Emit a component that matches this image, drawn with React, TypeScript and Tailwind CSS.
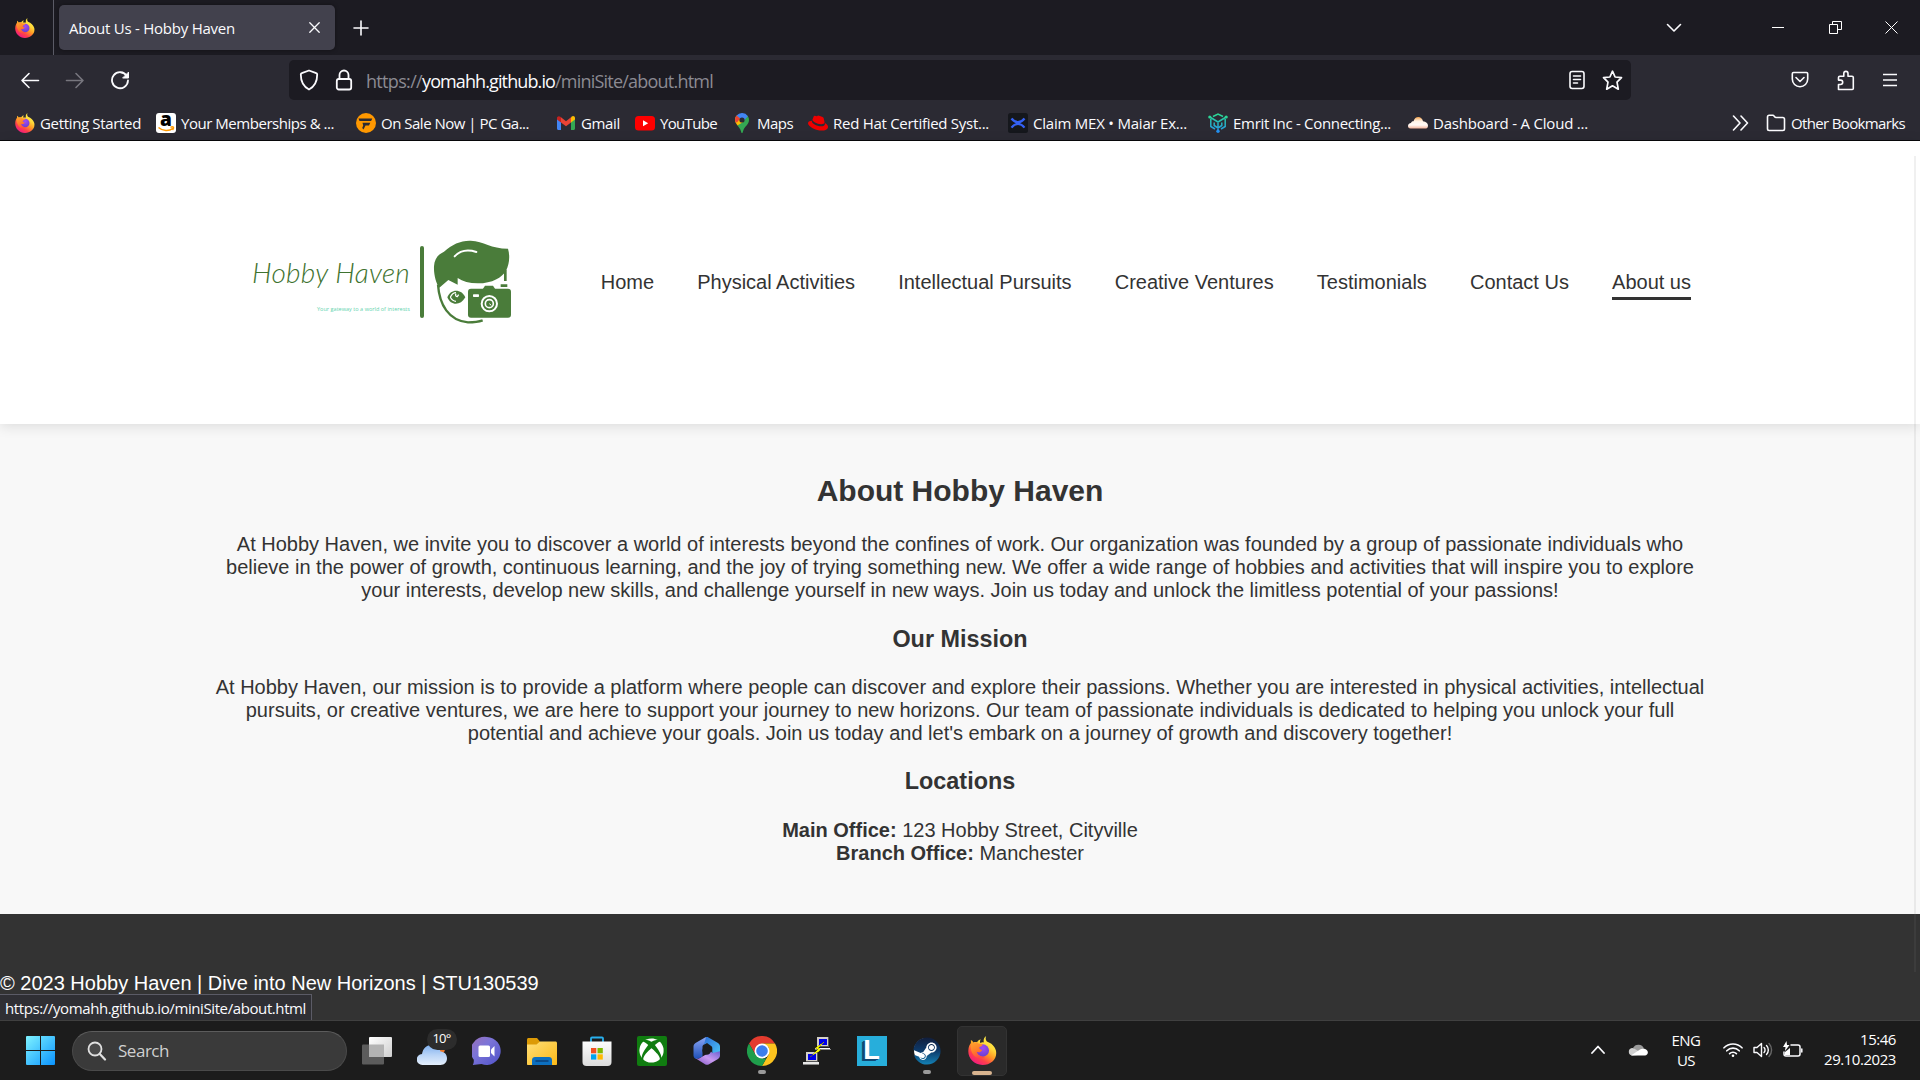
import React, { useLayoutEffect, useRef, useState } from "react";
import { FaSteam, FaXbox, FaRedhat } from "react-icons/fa";

/* Text whose tracking is adjusted so that it spans a given width. */
function Fit({ w, className = "", children }: { w: number; className?: string; children: string }) {
  const ref = useRef<HTMLSpanElement>(null);
  const [ls, setLs] = useState(0);
  useLayoutEffect(() => {
    if (ref.current) {
      const natural = ref.current.getBoundingClientRect().width;
      setLs((w - natural) / children.length);
    }
  }, []);
  return (
    <span ref={ref} className={"inline-block whitespace-pre " + className} style={{ letterSpacing: ls }}>
      {children}
    </span>
  );
}

function Firefox({ size = 20 }: { size?: number }) {
  return (
    <svg width={size} height={size} viewBox="0 0 40 40" className="shrink-0">
      <defs>
        <linearGradient id="ffBody" x1="0.85" y1="0.05" x2="0.25" y2="1">
          <stop offset="0" stopColor="#fff44f" />
          <stop offset="0.3" stopColor="#ffd93a" />
          <stop offset="0.52" stopColor="#ff9a24" />
          <stop offset="0.75" stopColor="#ff3f4b" />
          <stop offset="1" stopColor="#f0158a" />
        </linearGradient>
        <linearGradient id="ffHead" x1="0" y1="0" x2="0.4" y2="1">
          <stop offset="0" stopColor="#ffa52e" />
          <stop offset="0.6" stopColor="#ff7a2a" />
          <stop offset="1" stopColor="#ff4a45" />
        </linearGradient>
        <radialGradient id="ffGlobe" cx="0.5" cy="0.3" r="0.7">
          <stop offset="0" stopColor="#a24cf5" />
          <stop offset="1" stopColor="#6a3fd0" />
        </radialGradient>
      </defs>
      <path d="M25 0c-1 3-1 5 1 7.500C32 9.500 37 14 38.500 20 41 31 32 40 20 40 8 40-.500 30 .500 19.500.800 15 2 12 4 9.500V5.500c1.500.8 2.800 2 3.500 3.300C9 8.300 11 8.200 12.500 8.600c1.500-2.200 3-3.400 5-4-1 2-1.200 3.400-.5 5 2-1 3.500-1 5-.6C20.800 6 22 2 25 0Z" fill="url(#ffBody)" />
      <circle cx="20.500" cy="20" r="8.500" fill="url(#ffGlobe)" />
      <path d="M4.500 11c4-3 8-2.800 10.500-.2 2.200.2 4.500.3 5.200 1.200-.2 2.200-4.200 2.800-4.700 4-.2 1.700 1.500 2.500 4 3.200-1.200 3.300-5.500 3.800-8.200 2.500C13 27 18 29.500 24 28.500c-5 3.500-12 3-16-1.500C4 22 3 16 4.500 11Z" fill="url(#ffHead)" />
    </svg>
  );
}

const stroke = {
  fill: "none",
  stroke: "#fbfbfe",
  strokeWidth: 1.6,
  strokeLinecap: "round" as const,
  strokeLinejoin: "round" as const,
};

/* ---------- browser chrome ---------- */

function TabBar() {
  return (
    <div className="flex h-[55px] items-center bg-[#1c1b22]">
      <div className="flex h-full w-[54px] items-center border-r border-[#5b5b66] pl-[15px]">
        <Firefox />
      </div>
      <div className="ml-[5px] flex h-[45px] w-[276px] items-center justify-between rounded-[5px] bg-[#42414d] pr-[15px] pl-[10px] shadow-[0_0_4px_rgba(0,0,0,0.4)]">
        <Fit w={166} className="pt-[2px] text-[15px] text-[#fbfbfe]">About Us - Hobby Haven</Fit>
        <svg width="11" height="11" viewBox="0 0 11 11" {...stroke} strokeWidth={1.3}>
          <path d="M.8.8l9.400 9.400M10.200.8L.8 10.200" />
        </svg>
      </div>
      <svg className="ml-[18px]" width="16" height="16" viewBox="0 0 16 16" {...stroke}>
        <path d="M8 1v14M1 8h14" />
      </svg>
      <div className="ml-auto flex items-center pr-[22px]">
        <svg className="mr-[90px]" width="16" height="10" viewBox="0 0 16 10" {...stroke}>
          <path d="M1.500 1.500L8 8l6.500-6.500" />
        </svg>
        <svg className="mr-[45px]" width="12" height="12" viewBox="0 0 12 12" stroke="#fff" fill="none">
          <path d="M0 5.500h12" />
        </svg>
        <svg className="mr-[43px]" width="13" height="13" viewBox="0 0 13 13" stroke="#fff" fill="none">
          <path d="M.5 3.500h8v9h-8zM3.500 3.500v-3h9v8h-4" />
        </svg>
        <svg width="13" height="13" viewBox="0 0 13 13" stroke="#fff" fill="none">
          <path d="M.5.5l12 12M12.500.5l-12 12" />
        </svg>
      </div>
    </div>
  );
}

function Toolbar() {
  return (
    <div className="flex h-[50px] items-center bg-[#2b2a33] pl-[20px]">
      <svg width="20" height="20" viewBox="0 0 20 20" {...stroke}>
        <path d="M18.500 10.500H2M9 3.500l-7 7 7 7" />
      </svg>
      <svg className="ml-[25px]" width="20" height="20" viewBox="0 0 20 20" {...stroke} stroke="#77767e">
        <path d="M1.500 10.500H18M11 3.500l7 7-7 7" />
      </svg>
      <svg className="ml-[25px]" width="20" height="20" viewBox="0 0 20 20" {...stroke} strokeWidth={1.800}>
        <path d="M16.800 6A8 8 0 1 0 18 10.500" />
        <path d="M18.500 2.500V8H13z" fill="#fbfbfe" strokeWidth={1} />
      </svg>
      <div className="ml-[159px] flex h-[40px] w-[1342px] items-center rounded-[5px] bg-[#1c1b22] pr-[8px] pl-[10px]">
        <svg width="20" height="22" viewBox="0 0 20 22" {...stroke} strokeWidth={1.800}>
          <path d="M10 1.500l7.200 2.700c.6.200 1 .8 1 1.400C18.200 12 16 17.500 10 20.500 4 17.500 1.800 12 1.800 5.600c0-.6.4-1.200 1-1.400z" />
        </svg>
        <svg className="ml-[16px]" width="18" height="22" viewBox="0 0 18 22" {...stroke} strokeWidth={1.800}>
          <rect x="1.800" y="10" width="14.400" height="10.500" rx="2" />
          <path d="M4.500 10V6a4.500 4.500 0 0 1 9 0v4" />
        </svg>
        <div className="ml-[13px] flex pt-[3px] text-[18px] text-[#8b8a92]">
          <Fit w={56}>https://</Fit>
          <Fit w={133} className="text-[#fbfbfe]">yomahh.github.io</Fit>
          <Fit w={158}>/miniSite/about.html</Fit>
        </div>
        <svg className="ml-auto" width="16" height="20" viewBox="0 0 16 20" {...stroke}>
          <rect x="1" y="1.500" width="14" height="17" rx="2.200" />
          <path d="M4.500 6h7M4.500 9.500h7M4.500 13h4" />
        </svg>
        <svg className="ml-[17px]" width="21" height="21" viewBox="0 0 21 21" {...stroke} strokeWidth={1.700}>
          <path d="M10.500 1.200l2.600 5.800 6.400.7-4.500 4.500 1.300 7-5.800-3.400-5.800 3.400 1.300-7L1.500 7.700l6.400-.7z" />
        </svg>
      </div>
      <svg className="ml-[160px]" width="18" height="18" viewBox="0 0 18 18" {...stroke}>
        <path d="M2.500 1.500h13c.7 0 1.200.5 1.200 1.200V8a7.700 7.700 0 0 1-15.400 0V2.700c0-.7.5-1.200 1.200-1.200zM5 6.500l4 4 4-4" />
      </svg>
      <svg className="ml-[27px]" width="19" height="21" viewBox="0 0 19 21" {...stroke}>
        <path d="M2.500 19.500v-5h2a2.200 2.200 0 0 0 0-4.400h-2V7.500c0-.8.5-1.300 1.300-1.300h4V3.500a2 2 0 0 1 4.200 0v2.700h4c.8 0 1.300.5 1.300 1.300v11c0 .6-.5 1-1 1z" />
      </svg>
      <svg className="ml-[27px]" width="16" height="14" viewBox="0 0 16 14" {...stroke} strokeWidth={1.500} strokeLinecap="butt">
        <path d="M1 1.500h14M1 7h14M1 12.500h14" />
      </svg>
    </div>
  );
}

const AmazonIcon = () => (
  <div className="relative flex size-5 justify-center rounded-[3px] bg-white">
    <span className="font-['Open_Sans'] text-[19px] leading-[12px] font-extrabold text-black">a</span>
    <svg className="absolute inset-0" width="20" height="20" viewBox="0 0 20 20" fill="none" stroke="#ff9900" strokeWidth="1.500">
      <path d="M2.500 14.500c4.500 4 10.500 4 14.500.8M14.500 14.300c1-.5 2.500-.5 3 0 .2.800-.3 2-1 2.800" />
    </svg>
  </div>
);

const FanaticalIcon = () => (
  <svg width="20" height="20" viewBox="0 0 20 20">
    <circle cx="10" cy="10" r="10" fill="#ff9800" />
    <path d="M2.500 5.500h13.800l-1.200 2.600H3.500zM6.500 9.800h7.800l-1.300 2.600H9.500l-2 4L6.200 15l1-2.600z" fill="#2b2a33" />
  </svg>
);

const GmailIcon = () => (
  <svg width="20" height="20" viewBox="0 0 20 20">
    <path d="M1 5v10.500c0 .8.600 1.500 1.500 1.500H5V8.500z" fill="#4285f4" />
    <path d="M19 5v10.500c0 .8-.6 1.500-1.500 1.500H15V8.500z" fill="#34a853" />
    <path d="M15 4.500v5l4-3V5c0-1.900-2-2.700-3.300-1.400z" fill="#fbbc04" />
    <path d="M5 9.500V4.300l5 3.900 5-3.900v5.200l-5 3.800z" fill="#ea4335" />
    <path d="M1 5v1.500l4 3V4.300l-.7-.6C3 2.500 1 3.300 1 5z" fill="#c5221f" />
  </svg>
);

const YouTubeIcon = () => (
  <svg width="20" height="20" viewBox="0 0 20 20">
    <rect x="0" y="3" width="20" height="14.500" rx="3.500" fill="#f00" />
    <path d="M8 7.200v6l5.200-3z" fill="#fff" />
  </svg>
);

const MapsIcon = () => (
  <svg width="20" height="20" viewBox="0 0 20 20">
    <path d="M10 20c-.6 0-.8-1-1.300-2.600-.7-2-2-3.300-3.200-5L14.700 2c1.500 1.200 2.300 2.900 2.300 5 0 4.500-4.500 6.500-5.700 10.400C10.800 19 10.600 20 10 20z" fill="#34a853" />
    <path d="M5.500 12.400C4 10.500 3 9 3 7c0-1.700.6-3.200 1.600-4.400l3.800 3L12 8.500z" fill="#fbbc04" />
    <path d="M4.600 2.600l3.600 3L5 9.500 3.300 9C2.700 6.500 3.200 4.300 4.600 2.600z" fill="#ea4335" />
    <path d="M4.600 2.600A7 7 0 0 1 15.800 3.200L12 7.500 8.200 5.600z" fill="#4285f4" />
    <circle cx="10" cy="7" r="2.600" fill="#2b2a33" />
  </svg>
);

const ClaimIcon = () => (
  <svg width="20" height="20" viewBox="0 0 20 20">
    <rect width="20" height="20" rx="2.500" fill="#15171c" />
    <path d="M3.500 5.500c2 2.700 4 3.700 6.500 3.700s4.500-1 6.500-3.700M3.500 14.700c2-2.700 4-3.700 6.500-3.700s4.500 1 6.500 3.700" fill="none" stroke="#3461f5" strokeWidth="2.200" />
  </svg>
);

const EmritIcon = () => (
  <svg width="20" height="20" viewBox="0 0 20 20" fill="none" strokeWidth="1.500">
    <defs>
      <linearGradient id="em" x1="0" y1="0" x2="0" y2="20" gradientUnits="userSpaceOnUse">
        <stop offset="0" stopColor="#2bdc8c" />
        <stop offset="1" stopColor="#2390f0" />
      </linearGradient>
    </defs>
    <g stroke="url(#em)">
      <path d="M5 3.500L10 1l5 2.500M1.800 4l8.200 5 8.200-5M10 9v9M2.800 6v7.500L7 16M17.200 6v7.500L13 16M6.200 9.500V12.500L10 15l3.800-2.500V9.500" />
    </g>
    <circle cx="1.800" cy="4" r="1.600" fill="#2bd596" />
    <circle cx="18.200" cy="4" r="1.600" fill="#2bd596" />
    <circle cx="10" cy="18.200" r="1.700" fill="#2390f0" />
  </svg>
);

const CloudIcon = () => (
  <svg width="20" height="20" viewBox="0 0 20 20">
    <defs>
      <linearGradient id="cl" x1="0" y1="0" x2="0" y2="1">
        <stop offset="0" stopColor="#f6a34a" />
        <stop offset="0.35" stopColor="#fff3e6" />
        <stop offset="0.7" stopColor="#fffaf7" />
        <stop offset="1" stopColor="#f3b49a" />
      </linearGradient>
    </defs>
    <path d="M2.500 15.500C.8 15.500 0 14.300 0 13c0-1.700 1.300-2.700 3-2.900.3-1.500 1.300-2 2.500-1.900C6.300 5.600 8 4 10.300 4c2.300 0 4.200 1.600 4.700 4.300 3 .2 5 2 5 4.500 0 1.500-.8 2.700-2 2.700z" fill="url(#cl)" />
  </svg>
);

const bookmarks: { label: string; tw: number; box: string; icon: React.ReactNode }[] = [
  { label: "Getting Started", tw: 101, box: "w-[141px]", icon: <Firefox /> },
  { label: "Your Memberships & ...", tw: 153, box: "w-[200px]", icon: <AmazonIcon /> },
  { label: "On Sale Now | PC Ga...", tw: 148, box: "w-[200px]", icon: <FanaticalIcon /> },
  { label: "Gmail", tw: 39, box: "w-[79px]", icon: <GmailIcon /> },
  { label: "YouTube", tw: 57, box: "w-[97px]", icon: <YouTubeIcon /> },
  { label: "Maps", tw: 36, box: "w-[76px]", icon: <MapsIcon /> },
  { label: "Red Hat Certified Syst...", tw: 156, box: "w-[200px]", icon: <FaRedhat size={20} color="#ee0000" /> },
  { label: "Claim MEX • Maiar Ex...", tw: 154, box: "w-[200px]", icon: <ClaimIcon /> },
  { label: "Emrit Inc - Connecting...", tw: 158, box: "w-[200px]", icon: <EmritIcon /> },
  { label: "Dashboard - A Cloud ...", tw: 155, box: "w-[200px]", icon: <CloudIcon /> },
];

function BookmarksBar() {
  return (
    <div className="flex h-[36px] items-center border-b border-[#08080a] bg-[#2b2a33] pl-[15px] text-[15px] text-[#fbfbfe]">
      {bookmarks.map((b) => (
        <div key={b.label} className={"flex shrink-0 items-center gap-[5px] " + b.box}>
          {b.icon}
          <Fit w={b.tw} className="pt-[2px]">{b.label}</Fit>
        </div>
      ))}
      <div className="ml-auto flex items-center pr-[15px]">
        <svg className="mr-[17px]" width="17" height="16" viewBox="0 0 17 16" {...stroke}>
          <path d="M1.500 1l6.500 7-6.500 7M9 1l6.500 7L9 15" />
        </svg>
        <svg className="mr-[5px]" width="20" height="18" viewBox="0 0 20 18" {...stroke}>
          <path d="M1.500 3c0-1 .7-1.700 1.700-1.700h3.600c1.500 0 1.700 2.200 3.200 2.200h6.800c1 0 1.700.7 1.700 1.700v9.600c0 1-.7 1.700-1.700 1.700H3.200c-1 0-1.700-.7-1.700-1.700z" />
        </svg>
        <Fit w={114} className="pt-[2px]">Other Bookmarks</Fit>
      </div>
    </div>
  );
}

/* ---------- web page ---------- */

function Logo() {
  return (
    <div className="flex items-start">
      <div className="flex w-[158px] flex-col items-end pt-[14px]">
        <Fit w={158} className="font-['Lato'] text-[28px] leading-[40px] font-light text-[#3f7330] italic">Hobby Haven</Fit>
        <Fit w={93} className="mt-[13px] font-['Open_Sans'] text-[5.500px] leading-[8px] text-[#5fd3ae]">Your gateway to a world of interests</Fit>
      </div>
      <div className="mt-[8px] ml-[10px] h-[72px] w-[4px] rounded-full bg-[#4a7c3a]" />
      <svg className="ml-[6px]" width="86.670" height="90" viewBox="600 55 260 270">
        <g fill="#4a7c3a">
          <path d="M628 204C618 190 611 165 612 140c1-22 12-36 30-44 25-22 50-34 80-33 40 2 60 24 112 24 6 20 5 45-6 66-12 20-40 38-85 38-25 0-45-6-60-16v20l-28-14z" />
          <path d="M822 150h8v34h-8zM812 194h20v8h-20z" />
          <path d="M652 233c10-26 42-26 54 0-14 26-44 26-54 0z" />
          <rect x="714" y="207" width="129" height="87" rx="9" />
          <path d="M757 210l8-12h24l8 12z" />
        </g>
        <path d="M624 195c4 60 32 108 90 113 18 0 30-1 44-6" fill="none" stroke="#4a7c3a" strokeWidth="7" />
        <path d="M674 110c16-17 40-21 65-13" fill="none" stroke="#fff" strokeWidth="6" strokeLinecap="round" />
        <path d="M661 233c5-11 10-14 17-14M661 233c5 9 10 12 17 12" fill="none" stroke="#fff" strokeWidth="3.500" />
        <path d="M678 222c-3 5 0 9 4 9l4-6" fill="none" stroke="#fff" strokeWidth="4" />
        <rect x="729" y="224" width="18" height="8" rx="2" fill="#fff" />
        <circle cx="778" cy="252" r="23" fill="none" stroke="#fff" strokeWidth="6" />
        <circle cx="778" cy="252" r="12" fill="none" stroke="#fff" strokeWidth="5" />
        <path d="M778 252l6 5" stroke="#fff" strokeWidth="3" />
      </svg>
    </div>
  );
}

const nav = ["Home", "Physical Activities", "Intellectual Pursuits", "Creative Ventures", "Testimonials", "Contact Us"];

function Page() {
  return (
    <div className="relative flex h-[879px] flex-col bg-[#f8f8f8] font-['Liberation_Sans',Arial,sans-serif] text-[20px] leading-[23px] text-[#333]">
      <header className="z-10 flex h-[283px] shrink-0 items-start justify-between bg-white pr-[229px] pl-[252px] shadow-[0_2px_13px_rgba(0,0,0,0.12)]">
        <div className="mt-[97px]"><Logo /></div>
        <nav className="mt-[130px] flex gap-[43.130px]">
          {nav.map((n) => (
            <span key={n}>{n}</span>
          ))}
          <span className="border-b-3 border-[#333] pb-[3px]">About us</span>
        </nav>
      </header>
      <main className="h-[490px] shrink-0 pt-[50px] text-center whitespace-nowrap">
        <h1 className="text-[30px] leading-[34px] font-bold">About Hobby Haven</h1>
        <p className="mt-[25px]">
          At Hobby Haven, we invite you to discover a world of interests beyond the confines of work. Our organization was founded by a group of passionate individuals who<br />
          believe in the power of growth, continuous learning, and the joy of trying something new. We offer a wide range of hobbies and activities that will inspire you to explore<br />
          your interests, develop new skills, and challenge yourself in new ways. Join us today and unlock the limitless potential of your passions!
        </p>
        <h3 className="mt-[24px] text-[23.400px] leading-[27px] font-bold">Our Mission</h3>
        <p className="mt-[23px]">
          At Hobby Haven, our mission is to provide a platform where people can discover and explore their passions. Whether you are interested in physical activities, intellectual<br />
          pursuits, or creative ventures, we are here to support your journey to new horizons. Our team of passionate individuals is dedicated to helping you unlock your full<br />
          potential and achieve your goals. Join us today and let's embark on a journey of growth and discovery together!
        </p>
        <h3 className="mt-[23px] text-[23.400px] leading-[27px] font-bold">Locations</h3>
        <p className="mt-[24px]">
          <b>Main Office:</b> 123 Hobby Street, Cityville<br />
          <b>Branch Office:</b> Manchester
        </p>
      </main>
      <footer className="flex-1 bg-[#333] pt-[58px] text-white">© 2023 Hobby Haven | Dive into New Horizons | STU130539</footer>
      <div className="absolute top-[15px] right-[4px] z-20 h-[816px] w-[2px] bg-[#808080]/12" />
      <div className="absolute bottom-0 left-0 z-20 flex h-[26px] w-[312px] items-center border-t border-r border-[#5b5b66] bg-[#2f2f34] pt-[2px] pl-[5px] font-['Open_Sans','Noto_Sans',sans-serif] text-[15px] text-[#fbfbfe]">
        <Fit w={301}>https://yomahh.github.io/miniSite/about.html</Fit>
      </div>
    </div>
  );
}

/* ---------- taskbar ---------- */

const TaskView = () => (
  <svg width="30" height="30" viewBox="0 0 30 30">
    <defs>
      <linearGradient id="tv" x1="0" y1="0" x2="1" y2="1"><stop stopColor="#fff" /><stop offset="1" stopColor="#cfcfcf" /></linearGradient>
    </defs>
    <rect x="0" y="8.500" width="22" height="20" rx="1" fill="#5c5c5c" />
    <rect x="7" y="1" width="23" height="20" rx="1" fill="url(#tv)" />
    <path d="M7 8.500h15V21H7z" fill="#b3b3b3" />
  </svg>
);

const Weather = () => (
  <div className="relative size-[30px]">
    <svg className="absolute inset-0" width="30" height="30" viewBox="0 0 30 30">
      <defs>
        <linearGradient id="we" x1="0" y1="0" x2="0" y2="1"><stop stopColor="#7fb0ee" /><stop offset=".5" stopColor="#b9d4f7" /><stop offset="1" stopColor="#e4effc" /></linearGradient>
      </defs>
      <circle cx="22" cy="13" r="6" fill="#e8762c" />
      <path d="M5.500 29A5.500 5.500 0 0 1 5 18c1-6 5-9 9.500-9 4.500 0 7.500 2.500 9 6.500 4 .3 6.500 3 6.500 6.800 0 4-2.700 6.700-6.500 6.700z" fill="url(#we)" />
    </svg>
    <span className="absolute -top-[7px] left-[10px] flex h-[21px] w-[30px] items-center justify-center rounded-full bg-[#2c2c2c] text-[13px] text-white">
      <Fit w={18}>10°</Fit>
    </span>
  </div>
);

const Chat = () => (
  <svg width="30" height="30" viewBox="0 0 30 30">
    <defs>
      <linearGradient id="ch" x1="0" y1="0" x2="1" y2="1"><stop stopColor="#9a6fb8" /><stop offset=".4" stopColor="#7b74d8" /><stop offset="1" stopColor="#4f52c8" /></linearGradient>
    </defs>
    <path d="M15 1a14 14 0 1 1-5.500 27L.8 29c1-2 1.200-3.500.9-5.500A14 14 0 0 1 15 1z" fill="url(#ch)" />
    <rect x="6.500" y="9.500" width="11.500" height="11.500" rx="1.500" fill="#fff" />
    <path d="M19 13.500l3.500-3.500v10.500L19 17z" fill="#fff" />
  </svg>
);

const Explorer = () => (
  <svg width="30" height="30" viewBox="0 0 30 30">
    <defs>
      <linearGradient id="ex" x1="0" y1="0" x2="1" y2="1"><stop stopColor="#ffdf78" /><stop offset="1" stopColor="#fbb917" /></linearGradient>
    </defs>
    <path d="M0 8V3.500C0 2.700.7 2 1.500 2H10l3 3.500V10H0z" fill="#dc9a06" />
    <path d="M0 8.500h9.500L13 5.500h15.500c.8 0 1.500.7 1.500 1.500v21c0 .6-.4 1-1 1H1c-.6 0-1-.4-1-1z" fill="url(#ex)" />
    <path d="M5 29v-5c0-1.700 1.300-3 3-3h14c1.700 0 3 1.300 3 3v5z" fill="#0c6fbf" />
    <path d="M8.500 25h13" stroke="#0a3f78" strokeWidth="1.500" />
  </svg>
);

const Store = () => (
  <svg width="30" height="30" viewBox="0 0 30 30">
    <defs>
      <linearGradient id="st" x1="0" y1="0" x2="0" y2="1"><stop stopColor="#fdfdfd" /><stop offset="1" stopColor="#dcdcdc" /></linearGradient>
    </defs>
    <path d="M9 6V2.500c0-.6.400-1 1-1h10c.6 0 1 .4 1 1V6" fill="none" stroke="#28b0ee" strokeWidth="1.800" />
    <path d="M.5 5.500h29V26a4 4 0 0 1-4 4h-21a4 4 0 0 1-4-4z" fill="url(#st)" />
    <path d="M9 12h5.300v5.300H9z" fill="#f25022" /><path d="M15.500 12h5.300v5.300h-5.300z" fill="#7fba00" />
    <path d="M9 18.300h5.300v5.300H9z" fill="#00a4ef" /><path d="M15.500 18.300h5.300v5.300h-5.300z" fill="#ffb900" />
  </svg>
);

const Xbox = () => (
  <div className="flex size-[30px] items-center justify-center rounded-[2px] bg-[#107c10]">
    <FaXbox size={25} color="#fff" />
  </div>
);

const Office = () => (
  <svg width="30" height="30" viewBox="0 0 30 30">
    <defs>
      <linearGradient id="o1" x1="0" y1="0" x2="0" y2="1"><stop stopColor="#8ba6f5" /><stop offset="1" stopColor="#1e4fb8" /></linearGradient>
      <linearGradient id="o2" x1="0" y1="0" x2="1" y2="1"><stop stopColor="#2d6fd8" /><stop offset="1" stopColor="#4cc6f5" /></linearGradient>
      <linearGradient id="o3" x1="0" y1="1" x2="1" y2="0"><stop stopColor="#7a52c0" /><stop offset="0.5" stopColor="#c99af0" /><stop offset="1" stopColor="#6a5fd0" /></linearGradient>
    </defs>
    <path d="M13 1.500L3.500 7c-1.200.7-2 2-2 3.400v9.200c0 2.500 2.500 4.300 5 3l4-2.200V11c0-1 .5-2 1.400-2.500L19 4.500 15.500 1.500c-.8-.4-1.700-.4-2.500 0z" fill="url(#o1)" />
    <path d="M14 1.200l-2 7.300 3-1.500 4.500 3.300c.5.400.8 1 .8 1.700v7l6.200-1c1.200-.5 1.500-1.500 1.500-3v-4.600c0-1.400-.8-2.700-2-3.400L16.500 1.500c-.8-.4-1.700-.6-2.500-.3z" fill="url(#o2)" />
    <path d="M3.500 22.300c1.500.8 3 .5 4.500-.4L19 15.500l1.500 1.500 7.500-1.800v4.400c0 1.400-.8 2.700-2 3.400l-9 5.300c-1.200.7-2.800.7-4 0z" fill="url(#o3)" />
    <circle cx="14.700" cy="14.500" r="4.300" fill="#1c1c1c" />
  </svg>
);

const Chrome = () => (
  <svg width="30" height="30" viewBox="0 0 30 30">
    <path d="M2 7.500A15 15 0 0 1 28 7.500H15L8.500 18.700z" fill="#e33b2e" />
    <path d="M28 7.500A15 15 0 0 1 15 30l6.500-11.200L21.500 11.200 15 7.500z" fill="#fcc31e" />
    <path d="M15 30A15 15 0 0 1 2 7.500l6.500 11.300L15 22.500h4.300z" fill="#1f9e4b" />
    <circle cx="15" cy="15" r="7.500" fill="#fff" />
    <circle cx="15" cy="15" r="5.800" fill="#3b7ded" />
  </svg>
);

const Putty = () => (
  <svg width="30" height="30" viewBox="0 0 30 30" shapeRendering="crispEdges">
    <g>
      <path d="M15 1h12v10h-12z" fill="#d4d0c8" /><path d="M26 1h1v10h-12v-1h11z" fill="#555" /><path d="M17 3h8v6h-8z" fill="#0000e8" />
      <path d="M13 12h15v2h-15z" fill="#fff" /><path d="M13 13h16v1H13z" fill="#888" />
    </g>
    <g>
      <path d="M4 16h12v10H4z" fill="#d4d0c8" /><path d="M15 16h1v10H4v-1h11z" fill="#555" /><path d="M6 18h8v6H6z" fill="#0000e8" />
      <path d="M1 26h16v3H1z" fill="#e8e8e8" /><path d="M1 28h16v1H1z" fill="#888" />
    </g>
    <path d="M22 6l-9 6 3 1.500-8 7.500 11-7-3-2z" fill="#ff0" stroke="#7a7a00" strokeWidth=".4" />
  </svg>
);

const LApp = () => (
  <div className="relative flex size-[30px] items-center justify-center bg-[#27aedb]">
    <span className="font-['Liberation_Sans'] text-[27px] leading-none font-bold text-white [text-shadow:-1px_1px_0_#0f4a75,-2px_1px_0_#0f4a75,-3px_2px_0_#0f4a75]">L</span>
  </div>
);

const Steam = () => (
  <div className="relative flex size-[30px] items-center justify-center">
    <svg className="absolute size-0">
      <defs>
        <linearGradient id="sm" x1="0" y1="0" x2="0" y2="1"><stop stopColor="#111d3b" /><stop offset=".5" stopColor="#0d3b6b" /><stop offset="1" stopColor="#1381b5" /></linearGradient>
      </defs>
    </svg>
    <div className="absolute size-[25px] rounded-full bg-white" />
    <FaSteam size={28} fill="url(#sm)" className="relative" />
  </div>
);

const apps: { id: string; icon: React.ReactNode; dot?: boolean }[] = [
  { id: "view", icon: <TaskView /> },
  { id: "weather", icon: <Weather /> },
  { id: "chat", icon: <Chat /> },
  { id: "explorer", icon: <Explorer /> },
  { id: "store", icon: <Store /> },
  { id: "xbox", icon: <Xbox /> },
  { id: "office", icon: <Office /> },
  { id: "chrome", icon: <Chrome />, dot: true },
  { id: "putty", icon: <Putty /> },
  { id: "l", icon: <LApp /> },
  { id: "steam", icon: <Steam />, dot: true },
];

function Taskbar() {
  return (
    <div className="flex h-[60px] items-center border-t border-[#404040] bg-[#1c1c1c] pl-[26px] text-white">
      <svg width="29" height="29" viewBox="0 0 29 29">
        <defs>
          <linearGradient id="wi" x1="0" y1="0" x2="29" y2="29" gradientUnits="userSpaceOnUse"><stop stopColor="#7ff3ff" /><stop offset="1" stopColor="#0a93ff" /></linearGradient>
        </defs>
        <path d="M0 1a1 1 0 0 1 1-1h13v14H0zM15 0h13a1 1 0 0 1 1 1v13H15zM0 15h14v14H1a1 1 0 0 1-1-1zM15 15h14v13a1 1 0 0 1-1 1H15z" fill="url(#wi)" />
      </svg>
      <div className="ml-[17px] flex h-[40px] w-[275px] items-center rounded-full border border-[#4a4a4a] border-t-[#5c5c5c] bg-[#3a3a3a] pl-[14px]">
        <svg width="20" height="20" viewBox="0 0 20 20" fill="none" stroke="#e0e0e0" strokeWidth="1.800" strokeLinecap="round">
          <circle cx="8" cy="8" r="6.500" fill="#4a4a4a" /><path d="M12.800 13l5.200 5.500" strokeWidth="2.200" />
        </svg>
        <Fit w={51} className="ml-[11px] text-[17px] text-[#d0d0d0]">Search</Fit>
      </div>
      <div className="ml-[2px] flex h-full items-center">
        {apps.map((a) => (
          <div key={a.id} className="relative flex h-full w-[55px] items-center justify-center">
            {a.icon}
            {a.dot && <span className="absolute bottom-[6px] h-[4px] w-[8px] rounded-full bg-[#9a9a9a]" />}
          </div>
        ))}
        <div className="relative ml-[3px] flex h-[50px] w-[50px] items-center justify-center rounded-[5px] border border-[#333] bg-[#2a2a2a]">
          <Firefox size={29} />
          <span className="absolute bottom-0 h-[4px] w-[20px] rounded-full bg-[#d9b48f]" />
        </div>
      </div>
      <div className="ml-auto flex items-center pr-[24px] pb-[2px] text-[15px] leading-[20px]">
        <svg className="mr-[23px]" width="14" height="9" viewBox="0 0 14 9" {...stroke} strokeWidth={1.800}>
          <path d="M1 8l6-6.500L13 8" />
        </svg>
        <svg className="mr-[24px]" width="20" height="13" viewBox="0 0 20 13">
          <path d="M5 5a6 6 0 0 1 11 .5L10 9z" fill="#9a9a9a" />
          <path d="M4 12.500A3.800 3.800 0 0 1 4 5c1 0 2 .3 3 1l9 5.500z" fill="#d0d0d0" />
          <path d="M3 12.500L12 6.500c1.500-1 6-1.500 7.500 1.500 1 2.500-.5 4.500-2.500 4.500z" fill="#fff" />
        </svg>
        <div className="flex w-[28px] flex-col items-center">
          <Fit w={29}>ENG</Fit>
          <Fit w={18}>US</Fit>
        </div>
        <svg className="ml-[23px]" width="20" height="16" viewBox="0 0 20 16" {...stroke}>
          <path d="M1 5.800a12.500 12.500 0 0 1 18 0M3.800 8.800a8.600 8.600 0 0 1 12.400 0M6.600 11.600a4.800 4.800 0 0 1 6.800 0" />
          <circle cx="10" cy="13.800" r="1.300" fill="#fff" stroke="none" />
        </svg>
        <svg className="ml-[10px]" width="20" height="16" viewBox="0 0 20 16" {...stroke} strokeWidth={1.400}>
          <path d="M1 5.500h3L8.500 1.500v13L4 10.500H1zM11 5.500a3.500 3.500 0 0 1 0 5M13.500 3.500a6.500 6.500 0 0 1 0 9" />
          <path d="M16 1.500a9.500 9.500 0 0 1 0 13" stroke="#666" />
        </svg>
        <svg className="ml-[10px]" width="20" height="18" viewBox="0 0 20 18" {...stroke} strokeWidth={1.500}>
          <path d="M8 4h7a2 2 0 0 1 2 2v7a2 2 0 0 1-2 2H3a2 2 0 0 1-2-2v-2M18.800 8v3" />
          <path d="M3.500 0L0 6h2.500L2 10l4.500-6H4z" fill="#fff" stroke="none" />
          <path d="M2 14V11l5-4v7z" fill="#fff" stroke="none" />
        </svg>
        <div className="ml-[21px] flex flex-col items-end pb-[2px]">
          <Fit w={36}>15:46</Fit>
          <Fit w={72}>29.10.2023</Fit>
        </div>
      </div>
    </div>
  );
}

export default function App() {
  return (
    <div className="flex h-[1080px] w-[1920px] flex-col overflow-hidden bg-[#1c1b22] font-['Open_Sans','Noto_Sans',sans-serif]">
      <TabBar />
      <Toolbar />
      <BookmarksBar />
      <Page />
      <Taskbar />
    </div>
  );
}
